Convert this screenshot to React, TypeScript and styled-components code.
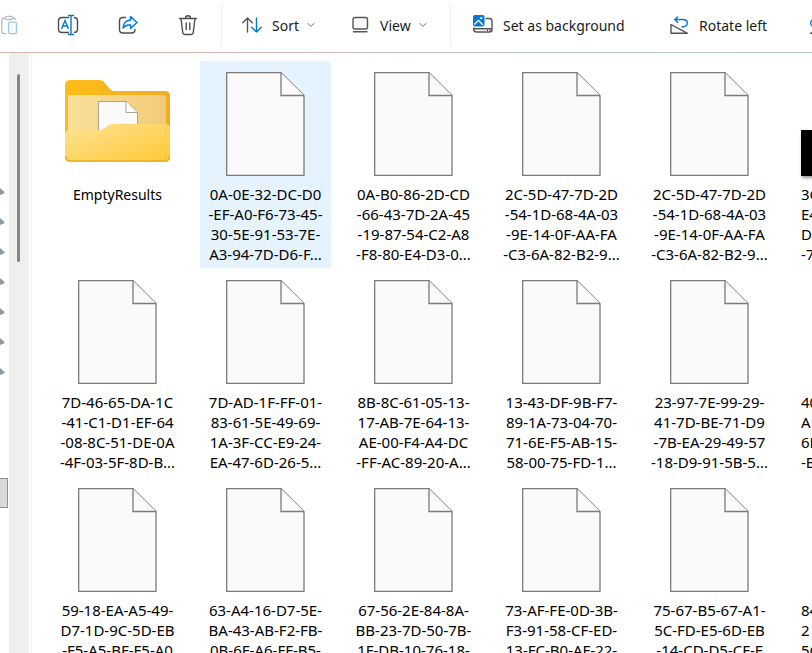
import React from "react";
import styled, { createGlobalStyle } from "styled-components";

const GlobalStyle = createGlobalStyle`
  * { box-sizing: border-box; }
  html, body, #root { height: 100%; margin: 0; }
  body {
    overflow: hidden;
    background: #fff;
    color: #000;
    font-family: "Noto Sans", "Open Sans", sans-serif;
    font-size: 14px;
  }
`;

const Window = styled.div`
  display: flex;
  flex-direction: column;
  height: 100vh;
  overflow: hidden;
`;

const Toolbar = styled.header`
  display: flex;
  flex: none;
  align-items: center;
  height: 53px;
  padding-bottom: 2px;
  overflow: hidden;
  border-bottom: 1px solid;
  border-image: linear-gradient(90deg, #dcb8ae, #d8bcb8 40%, #bcc6d8 62%, #b4c8dc) 1;
`;

const IconButton = styled.button<{ $faded?: boolean }>`
  display: flex;
  flex: none;
  align-items: center;
  justify-content: center;
  width: 60px;
  height: 50px;
  padding: 0;
  border: 0;
  background: none;
  opacity: ${(p) => (p.$faded ? 0.4 : 1)};
`;

const Clipboard = styled(IconButton)`
  justify-content: flex-end;
  width: 38px;
  padding-right: 20px;
`;

const IconGroup = styled.div`
  display: flex;
  flex: none;
  padding-right: 3px;
`;

const Divider = styled.span`
  flex: none;
  width: 1px;
  height: 40px;
  background: #ececec;
`;

const Command = styled.button<{ $width: number }>`
  display: flex;
  flex: none;
  align-items: center;
  width: ${(p) => p.$width}px;
  height: 50px;
  padding: 0 0 0 20px;
  border: 0;
  background: none;
  color: #1b1b1b;
  font: inherit;
  white-space: nowrap;
`;

const CommandLabel = styled.span`
  margin: 0 8px 0 10px;
`;

const Body = styled.main`
  display: flex;
  flex: 1;
  min-height: 0;
`;

const Navigation = styled.nav`
  display: flex;
  flex: none;
  flex-direction: column;
  width: 9px;
  padding-top: 134px;
  overflow: hidden;
`;

const Pin = styled.svg`
  display: block;
  flex: none;
  width: 5px;
  height: 9px;
  margin-bottom: 21px;
`;

const SelectedEdge = styled.span`
  flex: none;
  width: 8px;
  height: 30px;
  margin-top: 81px;
  border: 1px solid #919191;
  border-left: 0;
  background: #d9d9d9;
`;

const Track = styled.div`
  flex: none;
  width: 20px;
  padding: 21px 9px 0 8px;
  background: #efefef;
`;

const Thumb = styled.div`
  height: 188px;
  border-radius: 2px;
  background: #858585;
`;

const Files = styled.section`
  display: grid;
  flex: 1;
  grid-template-columns: repeat(6, 131px);
  grid-auto-rows: 207px;
  gap: 1px 17px;
  min-width: 0;
  margin-left: 2px;
  padding: 8px 0 0 20px;
  overflow: hidden;
  border-left: 1px solid #f2f2f2;
`;

const Tile = styled.button<{ $selected?: boolean }>`
  display: flex;
  flex-direction: column;
  align-items: center;
  padding: 10px 0 0;
  border: 0;
  border-radius: 1px;
  background: ${(p) => (p.$selected ? "#e5f3ff" : "none")};
  color: #000;
  font: inherit;
`;

const IconBox = styled.span`
  display: flex;
  align-items: flex-end;
  justify-content: center;
  width: 113px;
  height: 105px;
  margin-bottom: 8px;
`;

const FolderName = styled.span`
  line-height: 22px;
`;

const FileName = styled.span<{ $clipped?: boolean }>`
  align-self: ${(p) => (p.$clipped ? "flex-start" : "auto")};
  padding-left: ${(p) => (p.$clipped ? 9 : 0)}px;
  text-align: ${(p) => (p.$clipped ? "left" : "center")};
  font-size: 15px;
  line-height: 20px;
  white-space: pre;
`;

const Photo = styled.span`
  flex: 1;
  height: 46px;
  background: #000;
  box-shadow: 1px 2px 3px #999;
`;

const PasteIcon = () => (
  <svg width="20" height="24" viewBox="0 0 20 24" fill="none" strokeWidth="1.4">
    <path d="M7 21.500H4.500Q2 21.500 2 19V6.500Q2 4.500 4.500 4.500H6M14 4.500h1q2 0 2 2" stroke="#555" />
    <rect x="6" y="2.500" width="8" height="3.500" rx="1.700" stroke="#555" />
    <rect x="9.500" y="8.700" width="8.800" height="12.800" rx="1.800" stroke="#0078d4" fill="#eef7ff" />
  </svg>
);

const RenameIcon = () => (
  <svg width="22" height="22" viewBox="0 0 22 22" fill="none" strokeWidth="1.400">
    <path d="M12 3.500H5Q1.500 3.500 1.500 7v8Q1.500 18.500 5 18.500H12M17 3.500q3.500 0 3.500 3.500v8q0 3.500-3.500 3.500" stroke="#4d4d4d" />
    <path d="M4.500 15 8 6.500 11.500 15M5.700 12h4.600M11 1.500h6M14 1.500v19M11 20.500h6" stroke="#0078d4" />
  </svg>
);

const ShareIcon = () => (
  <svg width="22" height="22" viewBox="0 0 22 22" fill="none" strokeWidth="1.400" strokeLinejoin="round">
    <path d="M9 3.500H6Q2.500 3.500 2.500 7v8.500Q2.500 19 6 19H14.500q3.500 0 3.500-3.500V15" stroke="#4d4d4d" />
    <path d="M13.500 2.500 20 8.500 13.500 14.500V11Q8.500 10.500 6 14 6.500 6.500 13.500 6Z" stroke="#0078d4" fill="#eef7ff" />
  </svg>
);

const DeleteIcon = () => (
  <svg width="22" height="22" viewBox="0 0 22 22" fill="none" stroke="#4d4d4d" strokeWidth="1.400" strokeLinecap="round">
    <path d="M2.500 4.500h17M8.500 4Q8.500 1.700 11 1.700T13.500 4M4 4.500l1.700 13.500q.2 2.500 2.500 2.500h5.600q2.300 0 2.500-2.500L18 4.500M9.200 9v6.500M12.800 9v6.500" />
  </svg>
);

const SortIcon = () => (
  <svg width="20" height="18" viewBox="0 0 20 18" fill="none" strokeWidth="1.400" strokeLinecap="round" strokeLinejoin="round">
    <path d="M5.500 16V2M.8 6.700l4.700-4.700 4.700 4.700" stroke="#555" />
    <path d="M14.500 2v14M9.700 11.300l4.800 4.700 4.800-4.700" stroke="#0078d4" />
  </svg>
);

const ViewIcon = () => (
  <svg width="19" height="18" viewBox="0 0 19 18" fill="none" stroke="#555" strokeWidth="1.400" strokeLinecap="round">
    <rect x="2" y="1.500" width="14.500" height="11.500" rx="2" fill="#f7f7f7" />
    <path d="M2.500 15.800h13.500" />
  </svg>
);

const Chevron = () => (
  <svg width="8" height="6" viewBox="0 0 8 6" fill="none" stroke="#707070">
    <path d="M.8 1.200 4 4.400 7.200 1.200" />
  </svg>
);

const BackgroundIcon = () => (
  <svg width="22" height="22" viewBox="-2 0 22 22" fill="none" strokeWidth="1.400">
    <path d="M12.500 4.500H16.500q2.500 0 2.500 2.500V15.500q0 2.500-2.500 2.500H3.500Q.8 18 .8 15.500v-2M1 14.700H19" stroke="#555" />
    <path d="M14 16.300h1M16.500 16.300h1" stroke="#333" />
    <rect x="0" y="1" width="11.500" height="11.500" rx="2" fill="#0078d4" />
    <path d="m1.200 10.500 4.300-4 4.500 4.500" stroke="#fff" />
    <circle cx="8.300" cy="4.200" r="1.100" fill="#fff" />
  </svg>
);

const RotateIcon = ({ mirrored = false }: { mirrored?: boolean }) => (
  <svg width="20" height="20" viewBox="0 0 20 20" fill="none" strokeWidth="1.400" strokeLinejoin="round">
    <g transform={mirrored ? "matrix(-1 0 0 1 20 0)" : undefined}>
      <path d="M2 9.500v8.800h16.500Z" stroke="#555" fill="#f7f7f7" />
      <path d="M9 1.500 5.800 4.500l3.200 3.200M5.800 4.500h7.700Q18.300 4.500 18.300 8T14 11.800h-1.500" stroke="#0078d4" />
    </g>
  </svg>
);

const FileIcon = () => (
  <svg width="79" height="104" viewBox="0 0 79 104" fill="#fafafa" stroke="#7b7b78" strokeWidth="1.300">
    <path d="M.7.700H55L78 23.500v79.800H.7Z" />
    <path d="M55 .7V23.500h23" />
  </svg>
);

const FolderIcon = () => (
  <svg width="105" height="98" viewBox="0 0 105 98">
    <defs>
      <linearGradient id="folder-back" x2="1">
        <stop stopColor="#fdbd18" />
        <stop offset="1" stopColor="#efad25" />
      </linearGradient>
      <linearGradient id="folder-inside" x2="1">
        <stop stopColor="#fbe09a" />
        <stop offset="1" stopColor="#f1cb79" />
      </linearGradient>
      <linearGradient id="folder-front" x2="1" y2="1">
        <stop stopColor="#fee395" />
        <stop offset="1" stopColor="#ffc935" />
      </linearGradient>
    </defs>
    <path d="M6 2H34q4 0 6 3l5 6q2 2 4 2h51q5 0 5 5V72H0V7q0-5 6-5Z" fill="url(#folder-back)" />
    <path d="M5 17h94q2 0 2 2v40H3V19q0-2 2-2Z" fill="url(#folder-inside)" />
    <path d="M33.500 23.500H61L72.500 34v27h-39Z" fill="#fafafa" stroke="#aaa69a" />
    <path d="M61 23.500V34.500h11.500" fill="#fff" stroke="#aaa69a" />
    <path d="M5 52H34q4 0 7-3 3-3 7-3h52q5 0 5 5V79q0 5-5 5H5q-5 0-5-5V57q0-5 5-5Z" fill="url(#folder-front)" />
    <path d="M.5 78q0 5 5 5h94q5 0 5-5" fill="none" stroke="#e8ad20" strokeWidth="1.300" />
  </svg>
);

const files = [
  "0A-0E-32-DC-D0\n-EF-A0-F6-73-45-\n30-5E-91-53-7E-\nA3-94-7D-D6-F...",
  "0A-B0-86-2D-CD\n-66-43-7D-2A-45\n-19-87-54-C2-A8\n-F8-80-E4-D3-0...",
  "2C-5D-47-7D-2D\n-54-1D-68-4A-03\n-9E-14-0F-AA-FA\n-C3-6A-82-B2-9...",
  "2C-5D-47-7D-2D\n-54-1D-68-4A-03\n-9E-14-0F-AA-FA\n-C3-6A-82-B2-9...",
  "3C\nE4\nD\n-7",
  "7D-46-65-DA-1C\n-41-C1-D1-EF-64\n-08-8C-51-DE-0A\n-4F-03-5F-8D-B...",
  "7D-AD-1F-FF-01-\n83-61-5E-49-69-\n1A-3F-CC-E9-24-\nEA-47-6D-26-5...",
  "8B-8C-61-05-13-\n17-AB-7E-64-13-\nAE-00-F4-A4-DC\n-FF-AC-89-20-A...",
  "13-43-DF-9B-F7-\n89-1A-73-04-70-\n71-6E-F5-AB-15-\n58-00-75-FD-1...",
  "23-97-7E-99-29-\n41-7D-BE-71-D9\n-7B-EA-29-49-57\n-18-D9-91-5B-5...",
  "40\nA\n6D\n-E",
  "59-18-EA-A5-49-\nD7-1D-9C-5D-EB\n-F5-A5-BF-F5-A0",
  "63-A4-16-D7-5E-\nBA-43-AB-F2-FB-\n0B-6F-A6-FF-B5-",
  "67-56-2E-84-8A-\nBB-23-7D-50-7B-\n1F-DB-10-76-18-",
  "73-AF-FE-0D-3B-\nF3-91-58-CF-ED-\n13-FC-B0-AF-22-",
  "75-67-B5-67-A1-\n5C-FD-E5-6D-EB\n-14-CD-D5-CF-F",
  "84\n2\n5C",
];

const isEdge = (index: number) => index % 6 === 4;

export default function App() {
  return (
    <Window>
      <GlobalStyle />
      <Toolbar>
        <IconGroup>
          <Clipboard $faded aria-label="Paste" disabled><PasteIcon /></Clipboard>
          <IconButton aria-label="Rename"><RenameIcon /></IconButton>
          <IconButton aria-label="Share"><ShareIcon /></IconButton>
          <IconButton aria-label="Delete"><DeleteIcon /></IconButton>
        </IconGroup>
        <Divider />
        <Command $width={109}>
          <SortIcon /><CommandLabel>Sort</CommandLabel><Chevron />
        </Command>
        <Command $width={119}>
          <ViewIcon /><CommandLabel>View</CommandLabel><Chevron />
        </Command>
        <Divider />
        <Command $width={198}>
          <BackgroundIcon /><CommandLabel>Set as background</CommandLabel>
        </Command>
        <Command $width={140}>
          <RotateIcon /><CommandLabel>Rotate left</CommandLabel>
        </Command>
        <Command $width={140} aria-label="Rotate right">
          <RotateIcon mirrored />
        </Command>
      </Toolbar>
      <Body>
        <Navigation aria-label="Folders">
          {Array.from({ length: 7 }, (_, index) => (
            <Pin key={index} viewBox="0 0 5 9"><path d="M0 1 4.500 5 4 6.500 0 8Z" fill="#8f9ba3" /></Pin>
          ))}
          <SelectedEdge />
        </Navigation>
        <Track><Thumb /></Track>
        <Files aria-label="Files">
          <Tile>
            <IconBox><FolderIcon /></IconBox>
            <FolderName>EmptyResults</FolderName>
          </Tile>
          {files.map((name, index) => (
            <Tile key={index} $selected={index === 0}>
              <IconBox>
                {index === 4 ? <Photo /> : isEdge(index) ? null : <FileIcon />}
              </IconBox>
              <FileName $clipped={isEdge(index)}>{name}</FileName>
            </Tile>
          ))}
        </Files>
      </Body>
    </Window>
  );
}
